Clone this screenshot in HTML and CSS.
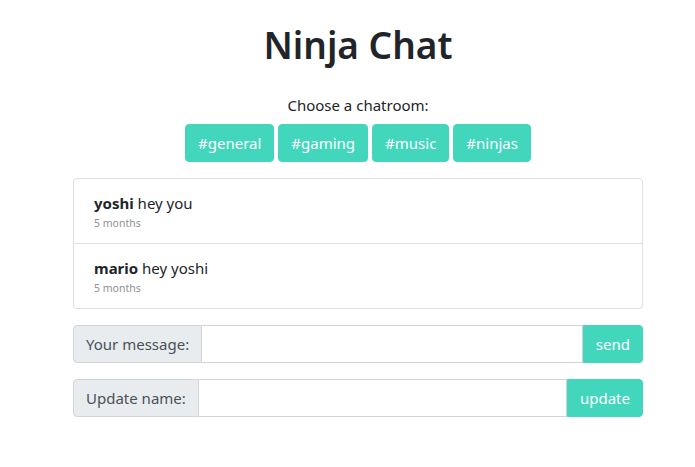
FILE: index.html
```html
<!DOCTYPE html>
<html lang="en">
<head>
<meta charset="utf-8">
<title>Ninja Chat</title>
<link rel="stylesheet" href="styles.css">
</head>
<body>
<div class="container">
  <h1 class="title">Ninja Chat</h1>
  <p class="prompt">Choose a chatroom:</p>
  <div class="rooms">
    <button class="btn" type="button">#general</button>
    <button class="btn" type="button">#gaming</button>
    <button class="btn" type="button">#music</button>
    <button class="btn" type="button">#ninjas</button>
  </div>
  <ul class="chat-list">
    <li class="chat-item">
      <div class="msg"><span class="author">yoshi</span> hey you</div>
      <div class="time">5 months</div>
    </li>
    <li class="chat-item">
      <div class="msg"><span class="author">mario</span> hey yoshi</div>
      <div class="time">5 months</div>
    </li>
  </ul>
  <form class="input-group">
    <label class="addon" for="message">Your message:</label>
    <input class="field" id="message" type="text">
    <button class="btn btn-end" type="button">send</button>
  </form>
  <form class="input-group">
    <label class="addon" for="name">Update name:</label>
    <input class="field" id="name" type="text">
    <button class="btn btn-end" type="button">update</button>
  </form>
</div>
</body>
</html>
```

FILE: styles.css
```css
* { box-sizing: border-box; }
html, body { margin: 0; padding: 0; background: #fff; }
body {
  font-family: "Noto Sans", "Open Sans", sans-serif;
  font-size: 15px;
  line-height: 24px;
  color: #212529;
}
.container {
  width: 570px;
  margin-left: 73px;
  padding-top: 21px;
}
.title {
  margin: 0;
  font-size: 37px;
  line-height: 48px;
  font-weight: 600;
  text-align: center;
}
.prompt {
  margin: 24px 0 0;
  text-align: center;
  line-height: 24px;
}
.rooms {
  display: flex;
  justify-content: center;
  gap: 4px;
  margin-top: 7px;
}
.btn {
  font-family: inherit;
  font-size: 15px;
  line-height: 24px;
  padding: 6px 12px;
  border: 1px solid #42d7bd;
  background: #42d7bd;
  color: #fff;
  border-radius: 4px;
  cursor: pointer;
}
.chat-list {
  list-style: none;
  margin: 16px 0 0;
  padding: 0;
  border: 1px solid #dfdfdf;
  border-radius: 4px;
}
.chat-item {
  padding: 12px 20px;
  height: 64px;
}
.chat-item + .chat-item {
  border-top: 1px solid #dfdfdf;
  height: 65px;
}
.msg { line-height: 24px; }
.author { font-weight: 700; }
.time {
  font-size: 10.5px;
  line-height: 16px;
  color: #8d9196;
}
.input-group {
  display: flex;
  margin: 16px 0 0;
  height: 38px;
}
.input-group + .input-group { margin-top: 16px; }
.addon {
  display: flex;
  align-items: center;
  padding: 0 12px;
  background: #e9ecef;
  border: 1px solid #ced4da;
  border-radius: 4px 0 0 4px;
  color: #495057;
  white-space: nowrap;
}
.field {
  flex: 1;
  min-width: 0;
  border: 1px solid #ced4da;
  border-left: 0;
  font-family: inherit;
  font-size: 15px;
  padding: 6px 12px;
  outline: none;
}
.btn-end {
  border-radius: 0 4px 4px 0;
}
```
